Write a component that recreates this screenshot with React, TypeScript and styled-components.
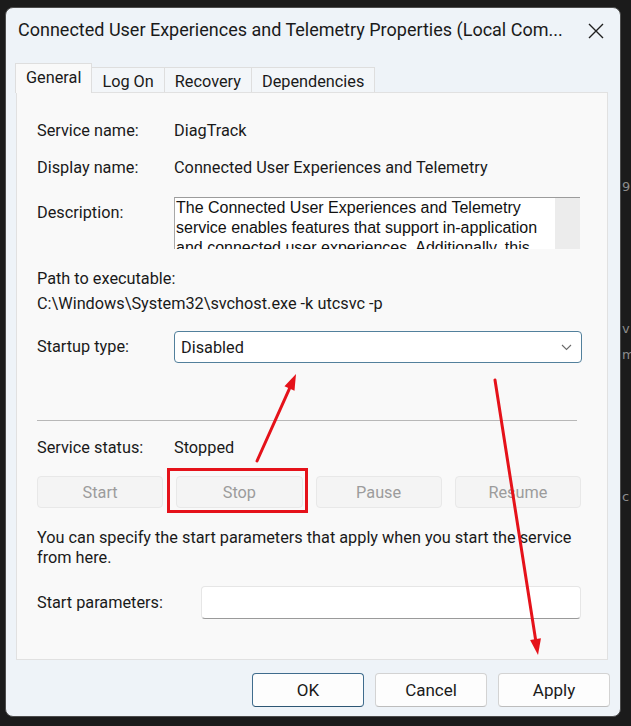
import styled, { createGlobalStyle } from "styled-components";

const UI = `"Segoe UI", Roboto, "Liberation Sans", sans-serif`;
const RED = "#e5121a";

const GlobalStyle = createGlobalStyle`
  html, body {
    margin: 0;
    padding: 0;
    background: #1b1b1b;
  }
  body {
    font-family: ${UI};
  }
`;

type Pt = [number, number];

// arrow head is worked out from the direction of the shaft
const Arrow = ({ from, to }: { from: Pt; to: Pt }) => {
  const dx = to[0] - from[0];
  const dy = to[1] - from[1];
  const len = Math.hypot(dx, dy);
  const ux = dx / len;
  const uy = dy / len;
  const bx = to[0] - ux * 16;
  const by = to[1] - uy * 16;
  const px = -uy * 5.5;
  const py = ux * 5.5;
  return (
    <g>
      <line x1={from[0]} y1={from[1]} x2={bx} y2={by} stroke={RED} strokeWidth={3} strokeLinecap="round" />
      <polygon points={`${to[0]},${to[1]} ${bx + px},${by + py} ${bx - px},${by - py}`} fill={RED} />
    </g>
  );
};

const App = () => {
  return (
    <>
      <GlobalStyle />
      <Page>
        <Window>
          <TitleBar>
            <Title>Connected User Experiences and Telemetry Properties (Local Com...</Title>
            <Close viewBox="0 0 16 16" width={16} height={16}>
              <path d="M1 1 L15 15 M15 1 L1 15" stroke="#1f1f1f" strokeWidth={1.4} fill="none" />
            </Close>
          </TitleBar>

          <Tabs>
            <Tab $active>General</Tab>
            <Tab>Log On</Tab>
            <Tab>Recovery</Tab>
            <Tab>Dependencies</Tab>
          </Tabs>

          <Panel>
            <Row>
              <Label>Service name:</Label>
              <Value>DiagTrack</Value>
            </Row>
            <Row $mt={17}>
              <Label>Display name:</Label>
              <Value>Connected User Experiences and Telemetry</Value>
            </Row>
            <Row $mt={19} $top>
              <Label $mt={6}>Description:</Label>
              <DescBox>
                <DescText>
                  The Connected User Experiences and Telemetry service enables features that support
                  in-application and connected user experiences. Additionally, this service manages the
                  event driven collection and transmission of diagnostic and usage information.
                </DescText>
                <ScrollTrack />
              </DescBox>
            </Row>
            <Line $mt={20}>Path to executable:</Line>
            <Line $mt={5}>C:\Windows\System32\svchost.exe -k utcsvc -p</Line>
            <Row $mt={17}>
              <Label>Startup type:</Label>
              <Select>
                <span>Disabled</span>
                <svg width="11" height="7" viewBox="0 0 11 7">
                  <path d="M1 1 L5.5 5.5 L10 1" stroke="#6b6b6b" strokeWidth={1.1} fill="none" />
                </svg>
              </Select>
            </Row>
            <Separator />
            <Row $mt={17}>
              <Label>Service status:</Label>
              <Value>Stopped</Value>
            </Row>
            <ButtonGrid>
              <GhostButton>Start</GhostButton>
              <GhostButton>Stop</GhostButton>
              <GhostButton>Pause</GhostButton>
              <GhostButton>Resume</GhostButton>
            </ButtonGrid>
            <Para>
              You can specify the start parameters that apply when you start the service from here.
            </Para>
            <Row $mt={18}>
              <Label $w={164}>Start parameters:</Label>
              <Input />
            </Row>
          </Panel>

          <Footer>
            <DialogButton $primary>OK</DialogButton>
            <DialogButton>Cancel</DialogButton>
            <DialogButton>Apply</DialogButton>
          </Footer>
        </Window>

        <Gutter>
          <Peek $mt={178}>9</Peek>
          <Peek $mt={124}>v</Peek>
          <Peek $mt={8}>m</Peek>
          <Peek $mt={124}>c</Peek>
        </Gutter>

        <Overlay viewBox="0 0 631 726" width={631} height={726}>
          <rect x={168.5} y={469.5} width={138} height={42} fill="none" stroke={RED} strokeWidth={3} />
          <Arrow from={[257, 461]} to={[296, 374]} />
          <Arrow from={[495, 380]} to={[538, 655]} />
        </Overlay>
      </Page>
    </>
  );
};

const Page = styled.div`
  position: relative;
  width: 631px;
  height: 726px;
  display: flex;
  overflow: hidden;
  background: #1b1b1b;
`;
const Window = styled.div`
  margin: 7px 0 0 5px;
  width: 616px;
  height: 710px;
  box-sizing: border-box;
  border: 1px solid #4c4c4c;
  border-radius: 8px;
  background: #eef3f8;
  display: flex;
  flex-direction: column;
  flex: none;
`;
const TitleBar = styled.div`
  height: 55px;
  box-sizing: border-box;
  padding: 11px 16px 0 12px;
  display: flex;
  align-items: flex-start;
`;
const Title = styled.div`
  flex: none;
  font-size: 18px;
  line-height: 22px;
  color: #1a1a1a;
  white-space: nowrap;
`;
const Close = styled.svg`
  margin: 4px 0 0 auto;
  flex: none;
`;
const Tabs = styled.div`
  height: 30px;
  display: flex;
  align-items: flex-end;
  padding-left: 10px;
  position: relative;
  z-index: 1;
`;
const Tab = styled.div<{ $active?: boolean }>`
  box-sizing: border-box;
  height: ${(p) => (p.$active ? 30 : 25)}px;
  margin-bottom: ${(p) => (p.$active ? 0 : 1)}px;
  padding: 4px 10px 0;
  font-size: 16.3px;
  line-height: 20px;
  color: #1a1a1a;
  background: ${(p) => (p.$active ? "#f9f9f9" : "#f3f6f9")};
  border: 1px solid #dedede;
  border-bottom: none;
  margin-left: -1px;
`;
const Panel = styled.div`
  margin: -1px 0 0 10px;
  width: 592px;
  height: 568px;
  box-sizing: border-box;
  border: 1px solid #e1e1e1;
  background: #f9f9f9;
  padding: 28px 26px 0 20px;
  display: flex;
  flex-direction: column;
`;
const Row = styled.div<{ $mt?: number; $top?: boolean }>`
  display: flex;
  align-items: ${(p) => (p.$top ? "flex-start" : "center")};
  margin-top: ${(p) => p.$mt ?? 0}px;
`;
const Label = styled.div<{ $w?: number; $mt?: number }>`
  width: ${(p) => p.$w ?? 137}px;
  flex: none;
  margin-top: ${(p) => p.$mt ?? 0}px;
  font-size: 16.3px;
  line-height: 20px;
  color: #1a1a1a;
`;
const Value = styled.div`
  font-size: 16.3px;
  line-height: 20px;
  color: #1a1a1a;
`;
const Line = styled(Value)<{ $mt?: number }>`
  margin-top: ${(p) => p.$mt ?? 0}px;
`;
const DescBox = styled.div`
  flex: 1;
  margin-right: 1px;
  height: 51px;
  display: flex;
  border-top: 1px solid #9c9c9c;
  border-left: 1px solid #a8a8a8;
  overflow: hidden;
`;
const DescText = styled.div`
  flex: 1;
  background: #ffffff;
  padding: 0 4px 0 1px;
  font-family: "Liberation Sans", Arial, sans-serif;
  font-size: 16px;
  line-height: 20px;
  color: #111;
`;
const ScrollTrack = styled.div`
  width: 25px;
  flex: none;
  background: #ececec;
`;
const Select = styled.div`
  flex: 1;
  margin-right: -1px;
  height: 32px;
  box-sizing: border-box;
  border: 1px solid #52809c;
  border-radius: 4px;
  background: #ffffff;
  display: flex;
  align-items: center;
  justify-content: space-between;
  padding: 0 9px 0 6px;
  font-size: 16.3px;
  color: #1a1a1a;
`;
const Separator = styled.div`
  margin: 57px 4px 0 0;
  height: 1px;
  background: #b8b8b8;
`;
const ButtonGrid = styled.div`
  margin-top: 18px;
  display: grid;
  grid-template-columns: repeat(4, 1fr);
  gap: 13px;
`;
const GhostButton = styled.div`
  height: 32px;
  box-sizing: border-box;
  border: 1px solid #e8e8e8;
  border-radius: 4px;
  background: #f4f4f4;
  display: flex;
  align-items: center;
  justify-content: center;
  font-size: 16.3px;
  color: #9c9c9c;
`;
const Para = styled.div`
  margin-top: 20px;
  font-size: 16.3px;
  line-height: 20px;
  color: #1a1a1a;
`;
const Input = styled.div`
  flex: 1;
  height: 33px;
  box-sizing: border-box;
  background: #ffffff;
  border: 1px solid #e6e6e6;
  border-bottom-color: #9a9a9a;
  border-radius: 4px;
`;
const Footer = styled.div`
  display: flex;
  justify-content: flex-end;
  gap: 11px;
  padding: 13px 10px 0 0;
`;
const DialogButton = styled.div<{ $primary?: boolean }>`
  width: 112px;
  height: 34px;
  box-sizing: border-box;
  border: 1px solid ${(p) => (p.$primary ? "#3f6c8d" : "#d3d3d3")};
  border-bottom-color: ${(p) => (p.$primary ? "#2d5674" : "#bdbdbd")};
  border-radius: 4px;
  background: #fdfdfd;
  display: flex;
  align-items: center;
  justify-content: center;
  font-size: 17px;
  color: #1a1a1a;
`;
const Gutter = styled.div`
  flex: 1;
  display: flex;
  flex-direction: column;
  padding-left: 1px;
  overflow: hidden;
`;
const Peek = styled.div<{ $mt: number }>`
  margin-top: ${(p) => p.$mt}px;
  font-family: "DejaVu Sans", sans-serif;
  font-size: 13px;
  line-height: 18px;
  color: #8c8c8c;
  white-space: nowrap;
`;
const Overlay = styled.svg`
  position: absolute;
  top: 0;
  left: 0;
  pointer-events: none;
`;

export default App;
